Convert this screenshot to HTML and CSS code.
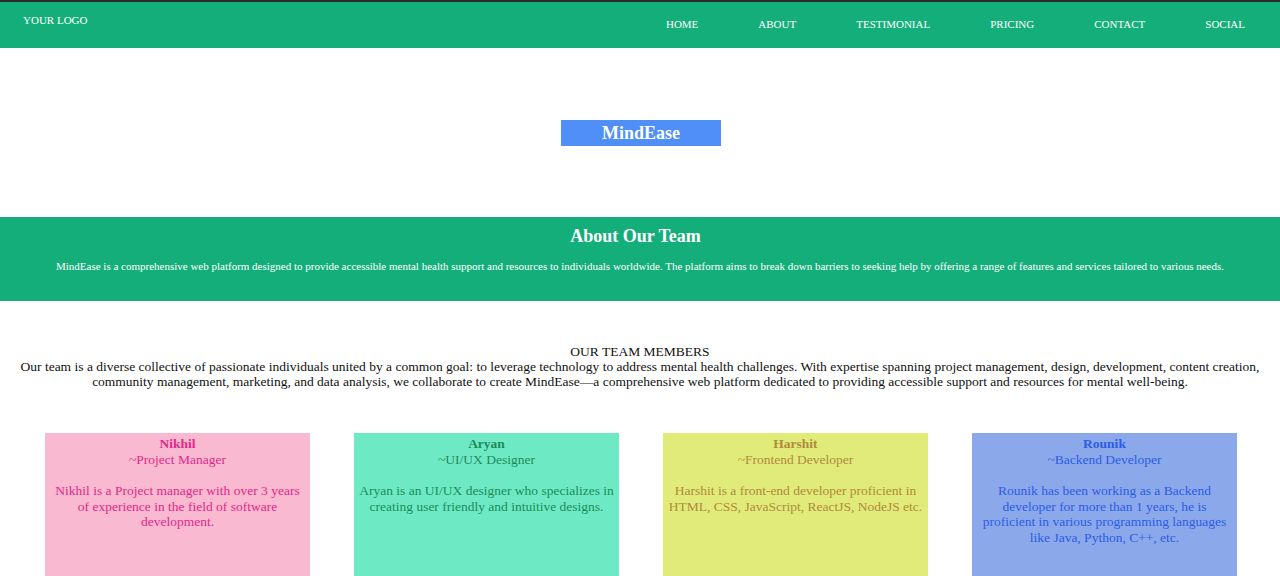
FILE: index.html
```html
<!DOCTYPE html>
<html>
<head>
<meta charset="utf-8">
<title>MindEase</title>
<link rel="stylesheet" href="styles.css">
</head>
<body>
<div class="topline"></div>
<nav class="nav">
  <div class="logo">YOUR LOGO</div>
  <ul class="links">
    <li>HOME</li>
    <li>ABOUT</li>
    <li>TESTIMONIAL</li>
    <li>PRICING</li>
    <li>CONTACT</li>
    <li>SOCIAL</li>
  </ul>
</nav>
<section class="hero">
  <div class="brand">MindEase</div>
</section>
<section class="about">
  <h2>About Our Team</h2>
  <p>MindEase is a comprehensive web platform designed to provide accessible mental health support and resources to individuals worldwide. The platform aims to break down barriers to seeking help by offering a range of features and services tailored to various needs.</p>
</section>
<section class="members">
  <div class="members-title">OUR TEAM MEMBERS</div>
  <p class="members-text">Our team is a diverse collective of passionate individuals united by a common goal: to leverage technology to address mental health challenges. With expertise spanning project management, design, development, content creation, community management, marketing, and data analysis, we collaborate to create MindEase—a comprehensive web platform dedicated to providing accessible support and resources for mental well-being.</p>
</section>
<section class="cards">
  <div class="card pink">
    <div class="name">Nikhil</div>
    <div class="role">~Project Manager</div>
    <p>Nikhil is a Project manager with over 3 years of experience in the field of software development.</p>
  </div>
  <div class="card green">
    <div class="name">Aryan</div>
    <div class="role">~UI/UX Designer</div>
    <p>Aryan is an UI/UX designer who specializes in creating user friendly and intuitive designs.</p>
  </div>
  <div class="card yellow">
    <div class="name">Harshit</div>
    <div class="role">~Frontend Developer</div>
    <p>Harshit is a front-end developer proficient in HTML, CSS, JavaScript, ReactJS, NodeJS etc.</p>
  </div>
  <div class="card blue">
    <div class="name">Rounik</div>
    <div class="role">~Backend Developer</div>
    <p>Rounik has been working as a Backend developer for more than 1 years, he is proficient in various programming languages like Java, Python, C++, etc.</p>
  </div>
</section>
</body>
</html>
```
FILE: styles.css
```css
html, body {
  margin: 0;
  padding: 0;
  background: #ffffff;
  font-family: "Liberation Serif", "Times New Roman", serif;
  color: #111;
}

.topline {
  height: 2px;
  background: #2b2b2b;
}

.nav {
  height: 46px;
  background: #14ae7b;
  display: flex;
  justify-content: space-between;
  align-items: flex-start;
  color: #ffffff;
  font-size: 11px;
}

.logo {
  padding: 12px 0 0 23px;
}

.links {
  list-style: none;
  margin: 0;
  padding: 16px 35px 0 0;
  display: flex;
  gap: 60px;
}

.hero {
  height: 169px;
  display: flex;
  align-items: center;
  justify-content: center;
  padding-left: 2px;
  box-sizing: border-box;
}

.brand {
  width: 160px;
  height: 26px;
  line-height: 26px;
  background: #4f8ff7;
  color: #ffffff;
  font-weight: bold;
  font-size: 18px;
  text-align: center;
}

.about {
  height: 84px;
  background: #14ae7b;
  color: #ffffff;
  text-align: center;
  box-sizing: border-box;
  padding-top: 9px;
}

.about h2 {
  margin: 0;
  padding-right: 9px;
  font-size: 18px;
  line-height: 20px;
}

.about p {
  margin: 14px 0 0;
  font-size: 11px;
  line-height: 13px;
}

.members {
  text-align: center;
  padding-top: 43px;
  font-size: 13.5px;
  line-height: 15px;
}

.members-title {
  margin: 0;
}

.members-text {
  margin: 0 16px;
}

.cards {
  display: flex;
  gap: 44px;
  padding: 0 43px 0 45px;
  margin-top: 44px;
}

.card {
  width: 265px;
  height: 160px;
  flex: none;
  box-sizing: border-box;
  padding: 3px 4px 0;
  text-align: center;
  font-size: 13.5px;
  line-height: 15.5px;
}

.card .name {
  font-weight: bold;
}

.card p {
  margin: 16px 0 0;
}

.pink { background: #f9b9d0; color: #e3288a; }
.green { background: #6deac4; color: #1d8a5b; }
.yellow { background: #e1eb7a; color: #b08a3c; }
.blue { background: #8ba8ea; color: #2d5ce6; }
```
